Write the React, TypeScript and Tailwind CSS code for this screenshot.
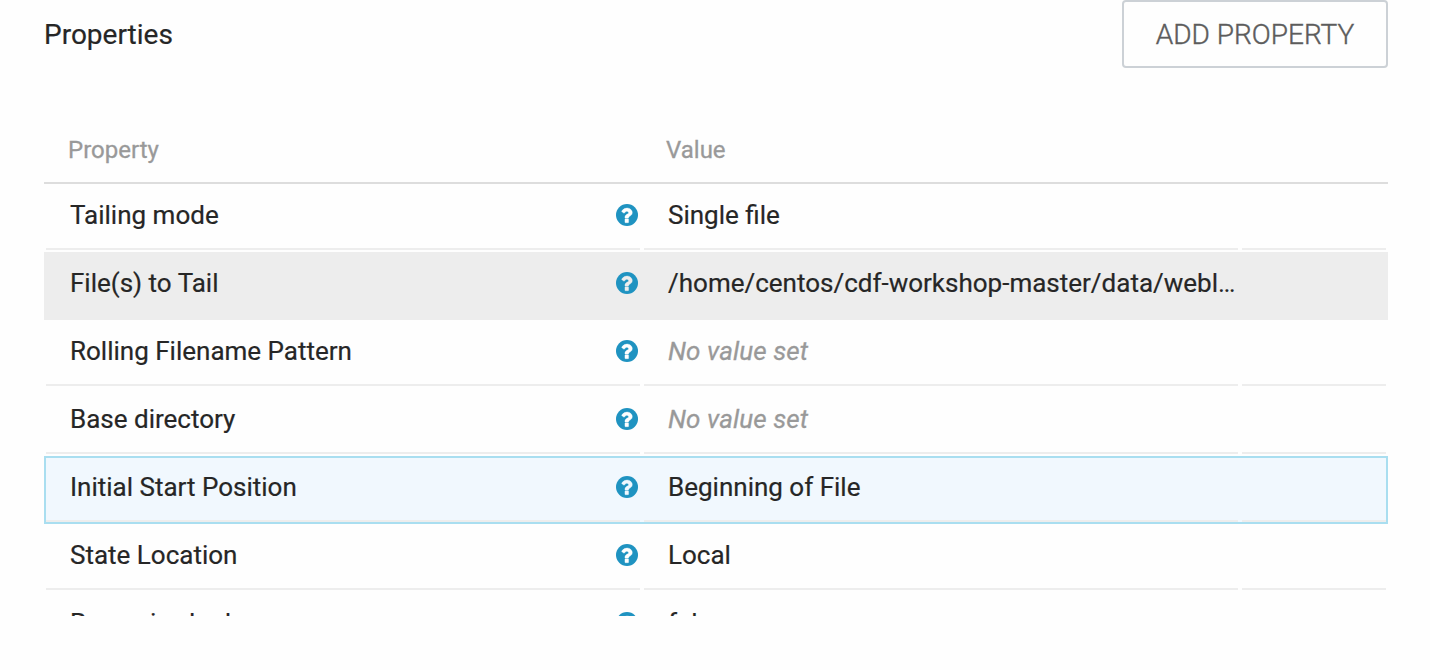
type Row = {
  name: string;
  value?: string;
  state?: 'hover' | 'selected';
};

const rows: Row[] = [
  { name: 'Tailing mode', value: 'Single file' },
  { name: 'File(s) to Tail', value: '/home/centos/cdf-workshop-master/data/weblogs.log', state: 'hover' },
  { name: 'Rolling Filename Pattern' },
  { name: 'Base directory' },
  { name: 'Initial Start Position', value: 'Beginning of File', state: 'selected' },
  { name: 'State Location', value: 'Local' },
  { name: 'Recursive lookup', value: 'false' },
];

function HelpIcon({ state }: Pick<Row, 'state'>) {
  const mark = state === 'hover' ? '#ededed' : state === 'selected' ? '#f1f8fe' : '#fefefe';
  return (
    <svg viewBox="128 128 1536 1536" className="mt-[18px] size-[22px] shrink-0" aria-hidden="true">
      <circle cx="896" cy="896" r="768" fill="#1f93c1" />
      <g fill={mark} stroke={mark} strokeWidth="24" transform="translate(-16 24)">
        <path d="M1024 1376v-210q0-14-9-23t-23-9h-192q-14 0-23 9t-9 23v210q0 14 9 23t23 9h192q14 0 23-9t9-23z" />
        <path d="M1280 704q0-88-55.500-163t-138.500-116-170-41q-243 0-371 213-15 24 8 42l132 100q7 6 19 6 16 0 25-12 53-68 86-92 34-24 86-24 48 0 85.500 26t37.500 59q0 38-20 61t-68 45q-63 28-115.500 86.500t-52.500 125.500v36q0 14 9 23t23 9h192q14 0 23-9t9-23q0-19 21.500-49.500t54.500-49.500q32-18 49-28.500t46-35 44.500-48 28-60.500 12.500-81z" />
      </g>
    </svg>
  );
}

function PropertyRow({ name, value, state }: Row) {
  const tone =
    state === 'hover'
      ? 'border-[#ededed] bg-[#ededed]'
      : state === 'selected'
        ? 'border-[#a9def0] bg-[#f1f8fe]'
        : 'border-transparent';
  return (
    <div className={`flex h-[68px] shrink-0 gap-1 border-2 text-[26px] leading-[58px] text-[#262626] ${tone}`}>
      <div className="flex h-16 w-[594px] justify-between border-b-2 border-[#ededed] pr-0.5 pl-6">
        <span className="[-webkit-text-stroke:0.2px_#262626]">{name}</span>
        <HelpIcon state={state} />
      </div>
      <div className="h-16 w-[594px] truncate border-b-2 border-[#ededed] pl-6">
        {value ? (
          <span className="[-webkit-text-stroke:0.2px_#262626]">{value}</span>
        ) : (
          <span className="tracking-[0.1px] text-[#999999] italic [-webkit-text-stroke:0.3px_#999999]">
            No value set
          </span>
        )}
      </div>
      <div className="h-16 w-36 border-b-2 border-[#ededed]" />
    </div>
  );
}

export default function App() {
  return (
    <main className="h-[670px] w-[1430px] overflow-hidden bg-[#fefefe] pr-[42px] pl-11 font-[Roboto,sans-serif]">
      <header className="flex h-[68px] items-center justify-between">
        <h1 className="pt-0.5 text-[28px] text-[#262626] [-webkit-text-stroke:0.2px_#262626]">Properties</h1>
        <button className="h-[68px] w-[266px] rounded-[4px] border-2 border-[#ccd1d6] pt-0.5 text-[28px] font-light text-[#5c5c5c] [-webkit-text-stroke:0.4px_#5c5c5c]">
          ADD PROPERTY
        </button>
      </header>
      <section className="mt-12 flex h-[500px] flex-col overflow-hidden">
        <div className="flex h-[68px] shrink-0 border-b-2 border-[#dddddd] pl-6 text-[24px] leading-[68px] text-[#999999] [-webkit-text-stroke:0.3px_#999999]">
          <span className="w-[598px]">Property</span>
          <span>Value</span>
        </div>
        {rows.map((row) => (
          <PropertyRow key={row.name} {...row} />
        ))}
      </section>
    </main>
  );
}
